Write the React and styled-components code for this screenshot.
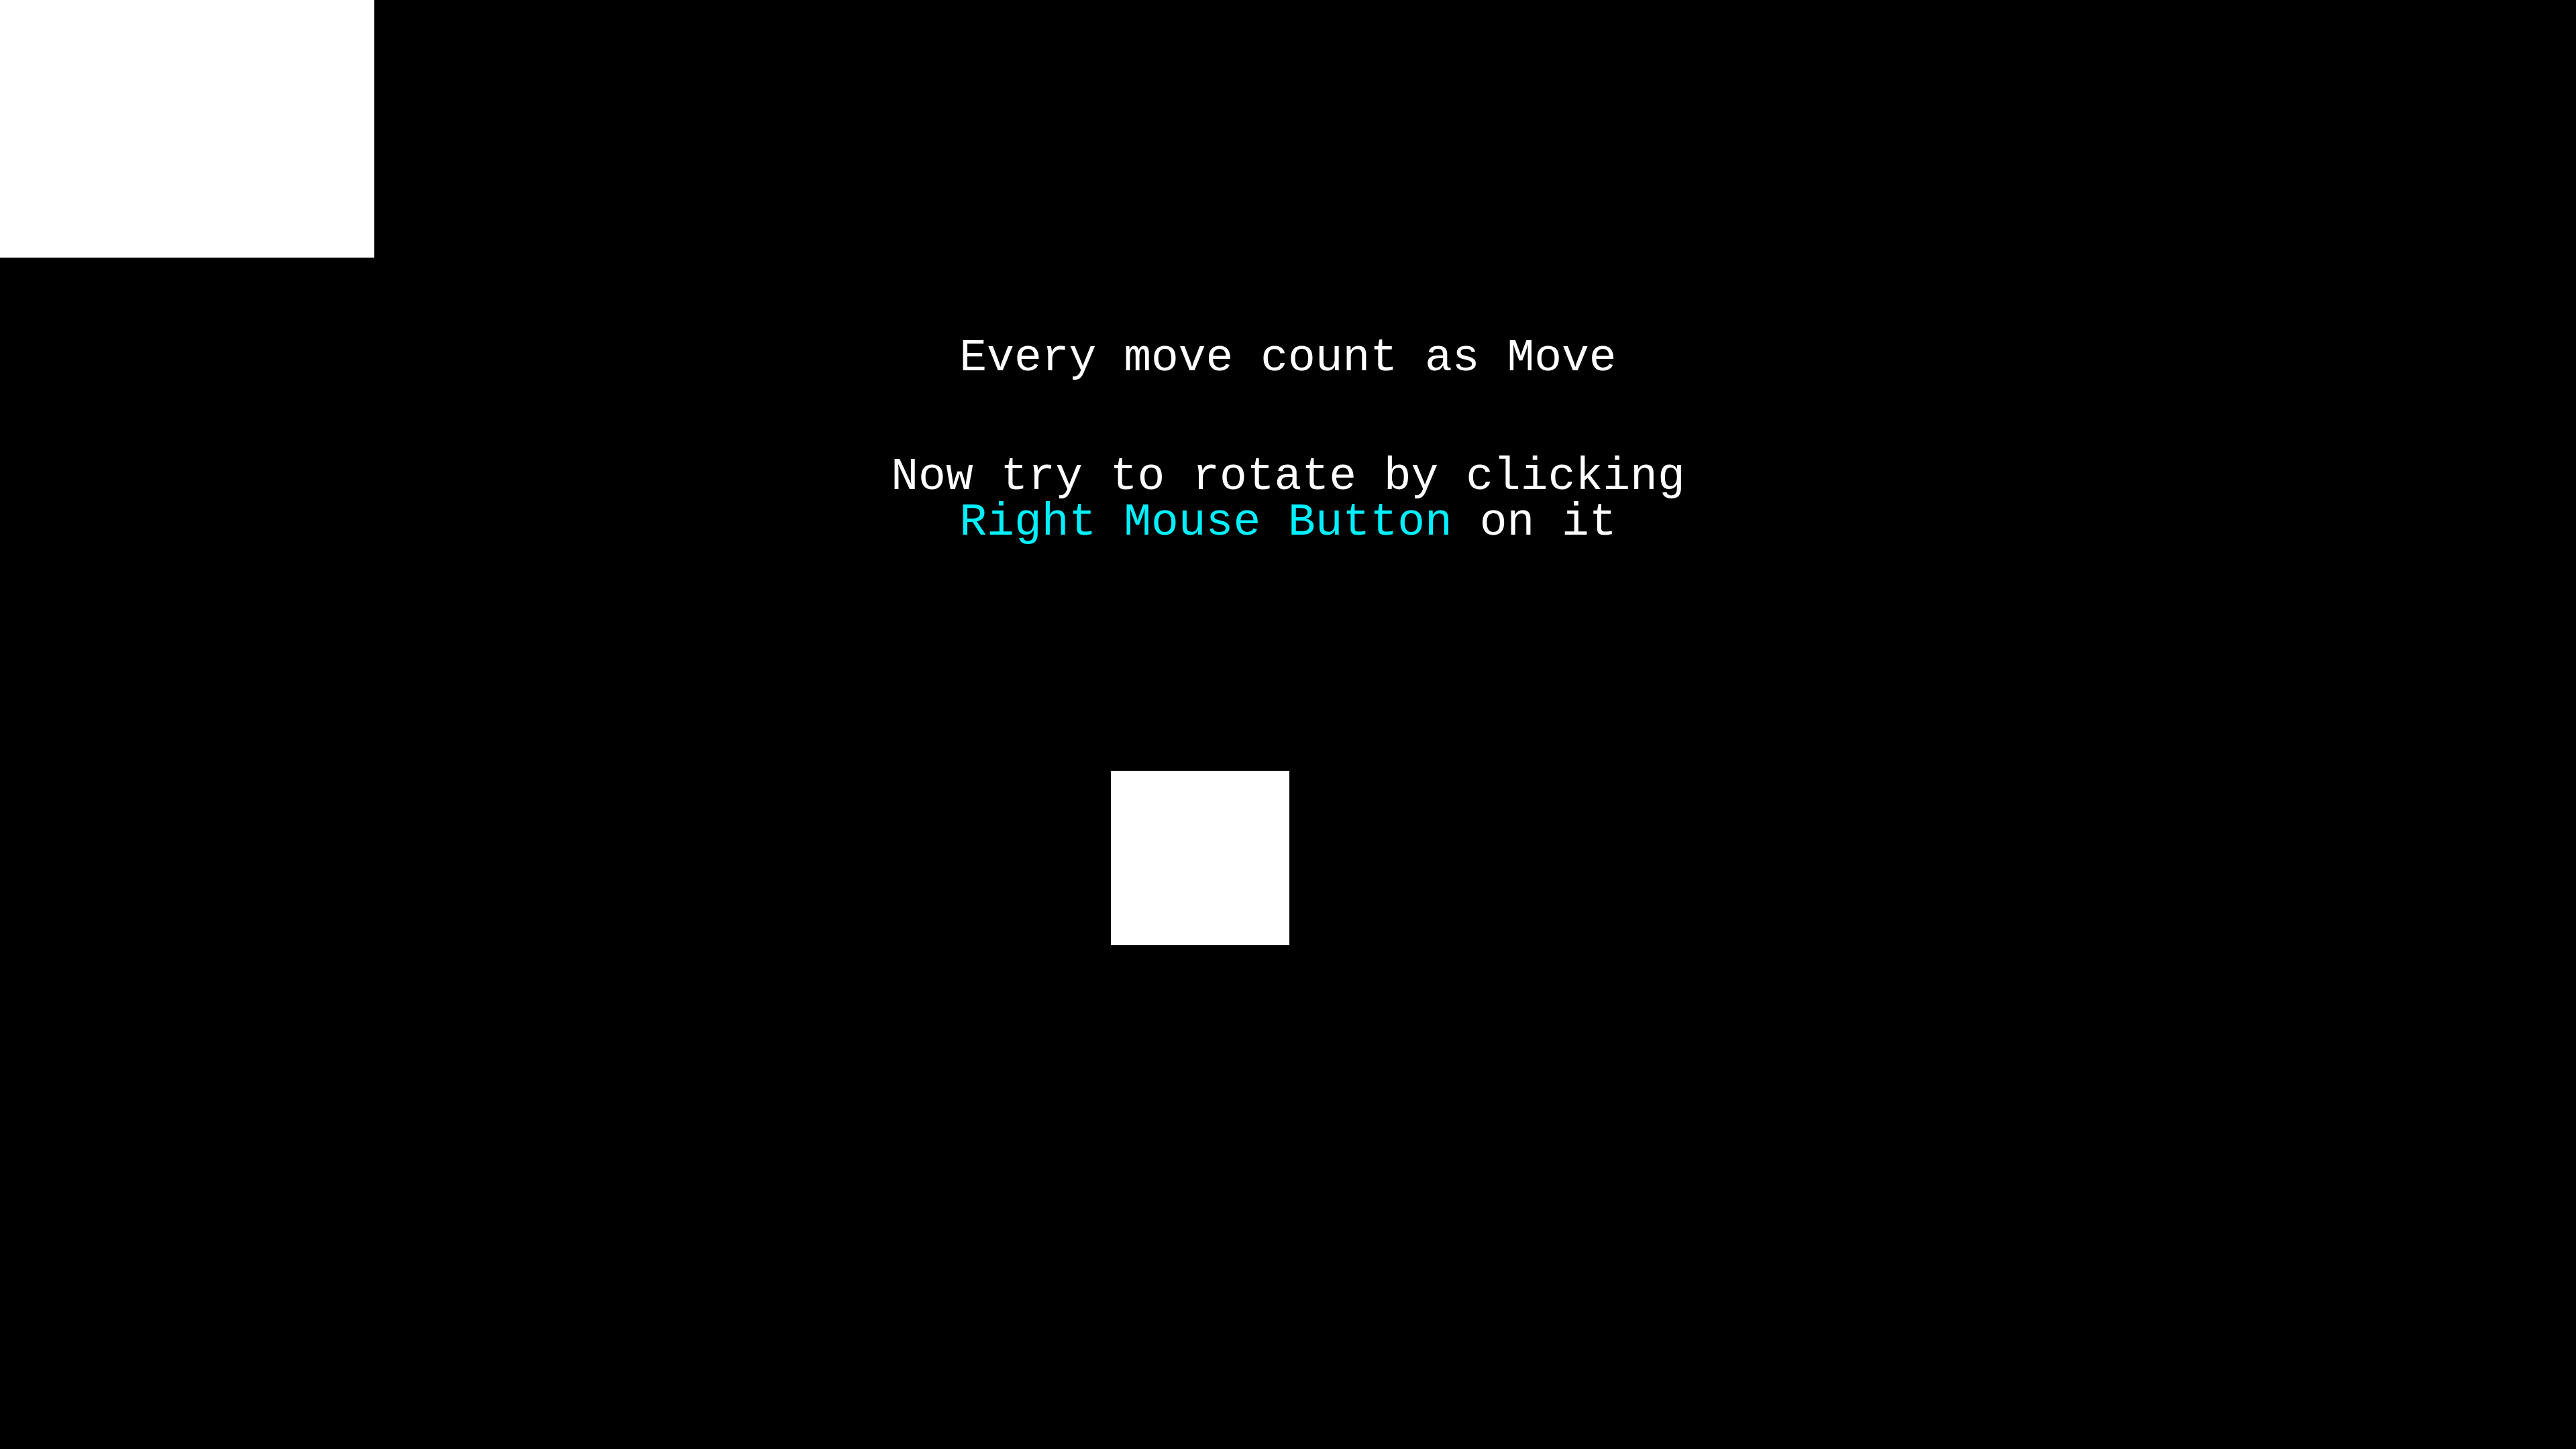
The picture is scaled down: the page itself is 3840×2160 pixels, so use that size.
import React from "react";
import styled, { createGlobalStyle } from "styled-components";

const GlobalStyle = createGlobalStyle`
  html, body {
    margin: 0;
    padding: 0;
    background: #000;
  }

  #root {
    min-height: 100vh;
  }
`;

const Stage = styled.div`
  position: relative;
  width: 3840px;
  height: 2160px;
  background: #000;
  overflow: hidden;

  display: flex;
  flex-direction: column;
`;

const Hud = styled.div`
  width: 558px;
  height: 384px;
  background: #fff;
`;

const Messages = styled.div`
  display: flex;
  flex-direction: column;
  align-items: center;
  margin-top: 116px;

  font-family: "Liberation Mono", "DejaVu Sans Mono", monospace;
  font-size: 68px;
  line-height: 68px;
  color: #fff;
  text-align: center;
  white-space: pre;
`;

const Line = styled.div`
  margin-top: ${(p) => p.gap || 0}px;
`;

const Key = styled.span`
  color: #00f0ff;
`;

const Piece = styled.div`
  width: 266px;
  height: 260px;
  margin-top: 336px;
  margin-left: 1656px;
  background: #fff;
`;

const App = () => {
  return (
    <>
      <GlobalStyle />
      <Stage>
        <Hud />
        <Messages>
          <Line>Every move count as Move</Line>
          <Line gap={109}>Now try to rotate by clicking</Line>
          <Line>
            <Key>Right Mouse Button</Key> on it
          </Line>
        </Messages>
        <Piece />
      </Stage>
    </>
  );
};

export default App;
